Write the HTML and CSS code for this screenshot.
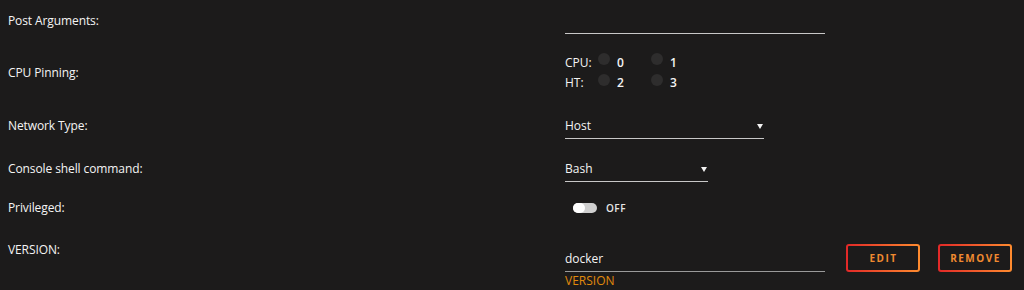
FILE: index.html
```html
<!DOCTYPE html>
<html>
<head>
<meta charset="utf-8">
<link rel="stylesheet" href="styles.css">
</head>
<body>
<div class="form">
  <div class="row r1">
    <div class="label">Post Arguments:</div>
    <div class="field"><div class="input w-wide"></div></div>
  </div>
  <div class="row r2">
    <div class="label">CPU Pinning:</div>
    <div class="field">
      <div class="cpu">
        <div class="cpu-line"><span class="cpu-tag">CPU:</span><span class="radio"></span><span class="num">0</span><span class="radio"></span><span class="num">1</span></div>
        <div class="cpu-line"><span class="cpu-tag">HT:</span><span class="radio"></span><span class="num">2</span><span class="radio"></span><span class="num">3</span></div>
      </div>
    </div>
  </div>
  <div class="row r3">
    <div class="label">Network Type:</div>
    <div class="field"><div class="input select w-net"><span>Host</span><span class="caret"></span></div></div>
  </div>
  <div class="row r4">
    <div class="label">Console shell command:</div>
    <div class="field"><div class="input select w-shell"><span>Bash</span><span class="caret"></span></div></div>
  </div>
  <div class="row r5">
    <div class="label">Privileged:</div>
    <div class="field"><div class="toggle"><span class="track"><span class="knob"></span></span><span class="toggle-text">OFF</span></div></div>
  </div>
  <div class="row r6">
    <div class="label">VERSION:</div>
    <div class="field version">
      <div class="vinput">
        <div class="input w-wide dim"><span>docker</span></div>
        <div class="hint">VERSION</div>
      </div>
      <div class="buttons">
        <button class="btn">EDIT</button>
        <button class="btn">REMOVE</button>
      </div>
    </div>
  </div>
</div>
</body>
</html>
```
FILE: styles.css
```css
html, body {
  margin: 0;
  padding: 0;
  background: #1c1b1b;
}
body {
  font-family: "Open Sans", "Noto Sans", sans-serif;
  font-size: 12px;
  color: #f4f4f4;
  width: 1024px;
  height: 290px;
  overflow: hidden;
}
.form {
  display: flex;
  flex-direction: column;
  padding: 8px 0 0 8px;
}
.row {
  display: flex;
  align-items: center;
}
.label {
  width: 557px;
  flex: none;
  line-height: 16px;
  letter-spacing: -0.1px;
}
.field {
  flex: 1;
  display: flex;
  align-items: center;
}
.r1 { height: 26px; }
.r2 { height: 41px; margin-top: 18px; }
.r3 { height: 26px; margin-top: 20px; }
.r4 { height: 26px; margin-top: 17px; }
.r5 { height: 20px; margin-top: 16px; }
.r6 { margin-top: 24px; align-items: flex-start; }

.input {
  height: 25px;
  border-bottom: 1px solid #c8c8c8;
  display: flex;
  align-items: center;
  justify-content: space-between;
  box-sizing: content-box;
}
.input.dim { border-bottom-color: #9a9a9a; }
.w-wide { width: 260px; }
.w-net { width: 199px; }
.w-shell { width: 143px; }
.caret {
  width: 0;
  height: 0;
  border-left: 3px solid transparent;
  border-right: 3px solid transparent;
  border-top: 5px solid #f2f2f2;
  margin-right: 1px;
  margin-top: 2px;
}

.cpu { display: flex; flex-direction: column; }
.cpu-line {
  display: flex;
  align-items: center;
  height: 20.5px;
}
.cpu-tag { width: 33px; }
.radio {
  width: 12px;
  height: 12px;
  border-radius: 50%;
  background: #2e2d2d;
  margin-top: -6px;
}
.num {
  width: 34px;
  padding-left: 7px;
  font-weight: 600;
}

.toggle {
  display: flex;
  align-items: center;
  padding-left: 8px;
}
.track {
  width: 24px;
  height: 10px;
  border-radius: 5px;
  background: #cfcfcf;
  display: flex;
  align-items: center;
}
.knob {
  width: 12px;
  height: 10px;
  border-radius: 5px;
  background: #ffffff;
}
.toggle-text {
  margin-left: 9px;
  font-size: 10px;
  font-weight: 600;
  letter-spacing: 0.5px;
  color: #e6e6e6;
}

.version { align-items: flex-start; }
.vinput { display: flex; flex-direction: column; padding-top: 4px; }
.hint {
  color: #e08a0b;
  font-size: 12px;
  line-height: 18px;
}
.buttons {
  display: flex;
  gap: 18px;
  margin-left: 21px;
  padding-top: 2px;
}
.btn {
  width: 74px;
  height: 28px;
  border: 2px solid transparent;
  border-radius: 3px;
  background:
    linear-gradient(#1c1b1b, #1c1b1b) padding-box,
    linear-gradient(90deg, #e22828, #ff8c2f) border-box;
  color: #f08a30;
  font-family: "Open Sans", "Noto Sans", sans-serif;
  font-size: 10px;
  font-weight: 700;
  letter-spacing: 1.5px;
  padding: 0 0 0 1px;
  box-sizing: border-box;
}
```
